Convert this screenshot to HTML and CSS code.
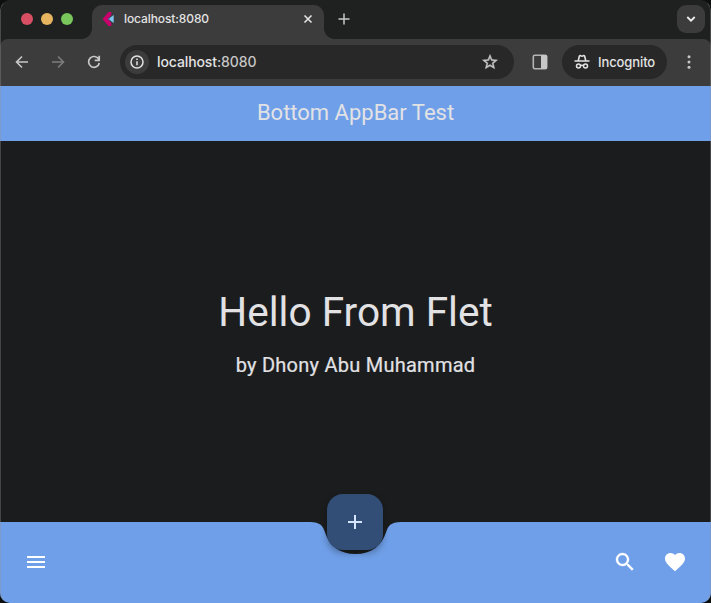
FILE: index.html
```html
<!DOCTYPE html>
<html lang="en">
<head>
<meta charset="utf-8">
<title>Bottom AppBar Test</title>
<link rel="stylesheet" href="styles.css">
</head>
<body>
<div class="window">
  <div class="tabstrip">
    <div class="lights"><i class="light red"></i><i class="light yellow"></i><i class="light green"></i></div>
    <div class="tab">
      <svg class="favicon" width="14" height="16" viewBox="0 0 14 16"><path d="M.5 8 6.500 1H9.300V4L6 8 9.300 12V15H6.500Z" fill="#c9006b"/><path d="M6.200 8 11.700 4V12Z" fill="#7bc4ee"/><path d="M6 8 7.600 6.800V9.200Z" fill="#4a6fb4"/></svg>
      <span class="tab-title">localhost:8080</span>
      <svg class="close" width="10" height="10" viewBox="0 0 10 10"><path d="M1.500 1.500 8.500 8.500M8.500 1.500 1.500 8.500" stroke="#e3e3e3" stroke-width="1.600"/></svg>
    </div>
    <svg class="new-tab" width="12" height="12" viewBox="0 0 12 12"><path d="M6 .5V11.500M.5 6H11.500" stroke="#c7c7c7" stroke-width="1.500"/></svg>
    <div class="tab-search"><svg width="10" height="8" viewBox="0 0 10 8"><path d="M1.300 2 5 5.700 8.700 2" fill="none" stroke="#eee" stroke-width="1.800"/></svg></div>
  </div>
  <div class="toolbar">
    <svg class="nav back" width="14" height="14" viewBox="0 0 14 14"><path d="M13 7H1.800M7 1.500 1.500 7 7 12.500" fill="none" stroke="#c7c7c7" stroke-width="1.600"/></svg>
    <svg class="nav forward" width="14" height="14" viewBox="0 0 14 14"><path d="M1 7H12.200M7 1.500 12.500 7 7 12.500" fill="none" stroke="#7c7c7c" stroke-width="1.600"/></svg>
    <svg class="nav reload" width="16" height="16" viewBox="0 0 16 16"><path d="M12.700 5.200A5.400 5.400 0 1 0 13.300 9M13.200 1.800V6.300H8.700" fill="none" stroke="#c7c7c7" stroke-width="1.700"/></svg>
    <div class="omnibox">
      <span class="site-info"><svg width="14" height="14" viewBox="0 0 14 14"><circle cx="7" cy="7" r="6" fill="none" stroke="#e3e3e3" stroke-width="1.500"/><path d="M7 6.200V10.300M7 3.500V5" stroke="#e3e3e3" stroke-width="1.500"/></svg></span>
      <span class="url">localhost<span class="port">:8080</span></span>
      <svg class="star" width="18" height="18" viewBox="0 0 24 24"><path d="M22 9.240l-7.190-.62L12 2 9.190 8.630 2 9.240l5.460 4.730L5.820 21 12 17.270 18.180 21l-1.630-7.030L22 9.240zM12 15.400l-3.760 2.270 1-4.280-3.320-2.880 4.380-.38L12 6.100l1.710 4.040 4.380.38-3.320 2.880 1 4.280L12 15.400z" fill="#c7c7c7" stroke="#c7c7c7" stroke-width=".6"/></svg>
    </div>
    <svg class="panel" width="16" height="16" viewBox="0 0 16 16"><rect x="1.300" y="1.300" width="13.400" height="13.400" rx="1.500" fill="none" stroke="#b4b4b4" stroke-width="1.600"/><path d="M9 1H13.500Q15 1 15 2.500V13.500Q15 15 13.500 15H9Z" fill="#c7c7c7"/></svg>
    <div class="incognito">
      <svg width="16" height="16" viewBox="0 0 16 16"><path d="M4.300 6.500 5.200 2.700Q5.600 1.300 6.800 1.800L8 2.200 9.200 1.800Q10.400 1.300 10.800 2.700L11.700 6.500M.5 7H15.500M6 11.800Q8 10.600 10 11.800" fill="none" stroke="#e3e3e3" stroke-width="1.600"/><circle cx="4.500" cy="12" r="2" fill="none" stroke="#e3e3e3" stroke-width="1.500"/><circle cx="11.500" cy="12" r="2" fill="none" stroke="#e3e3e3" stroke-width="1.500"/></svg>
      <span>Incognito</span>
    </div>
    <svg class="more" width="4" height="16" viewBox="0 0 4 16"><g fill="#c7c7c7"><circle cx="2" cy="2.700" r="1.500"/><circle cx="2" cy="8" r="1.500"/><circle cx="2" cy="13.300" r="1.500"/></g></svg>
  </div>
  <header class="appbar"><span>Bottom AppBar Test</span></header>
  <main class="content">
    <h1>Hello From Flet</h1>
    <p>by Dhony Abu Muhammad</p>
  </main>
  <footer class="bottombar">
    <svg class="bar-shape" width="711" height="81" viewBox="0 0 711 81"><path d="M0 0H306C318 0 322 1.500 324.500 9C329 24 340 32 355.500 32C371 32 382 24 386.500 9C389 1.500 393 0 405 0H711V81H0Z" fill="#6f9fe8"/></svg>
    <button class="fab" aria-label="Add"><svg width="24" height="24" viewBox="0 0 24 24"><path d="M19 13h-6v6h-2v-6H5v-2h6V5h2v6h6v2z" fill="#d6e5ff"/></svg></button>
    <svg class="action menu" width="24" height="24" viewBox="0 0 24 24"><path d="M3 18h18v-2H3v2zm0-5h18v-2H3v2zm0-7v2h18V6H3z"/></svg>
    <svg class="action search" width="24" height="24" viewBox="0 0 24 24"><path stroke="#fff" stroke-width=".3" d="M15.500 14h-.79l-.28-.27C15.410 12.590 16 11.110 16 9.500 16 5.910 13.090 3 9.500 3S3 5.910 3 9.500 5.910 16 9.500 16c1.610 0 3.090-.59 4.230-1.570l.27.28v.79l5 4.990L20.490 19l-4.990-5zm-6 0C7.010 14 5 11.990 5 9.500S7.010 5 9.500 5 14 7.010 14 9.500 11.990 14 9.500 14z"/></svg>
    <svg class="action" width="24" height="24" viewBox="0 0 24 24"><path d="M12 21.350l-1.450-1.320C5.400 15.360 2 12.280 2 8.500 2 5.420 4.420 3 7.500 3c1.740 0 3.410.81 4.500 2.090C13.090 3.810 14.760 3 16.500 3 19.580 3 22 5.420 22 8.500c0 3.780-3.400 6.860-8.550 11.540L12 21.350z"/></svg>
  </footer>
</div>
</body>
</html>
```
FILE: styles.css
```css
* { box-sizing: border-box; }
body { margin: 0; background: #0c0f0e; }
svg { display: block; flex: none; }
.window {
  position: relative;
  width: 711px;
  height: 603px;
  display: flex;
  flex-direction: column;
  overflow: hidden;
  border-radius: 10px;
  background: #1f2120;
  font-family: Roboto, sans-serif;
}
.window::after {
  content: "";
  position: absolute;
  inset: 0;
  border: 1px solid rgba(150, 150, 150, .35);
  border-top-color: transparent;
  border-bottom-color: transparent;
  border-radius: 10px;
  pointer-events: none;
}
.tabstrip { height: 39px; display: flex; align-items: flex-start; }
.lights { display: flex; gap: 8px; margin: 13px 0 0 21px; width: 71px; flex: none; }
.light { width: 12px; height: 12px; border-radius: 50%; }
.red { background: #d84f63; }
.yellow { background: #e7b45f; }
.green { background: #78c65c; }
.tab {
  position: relative;
  width: 232px;
  height: 34px;
  margin-top: 5px;
  padding: 0 11px 6px 10px;
  display: flex;
  align-items: center;
  border-radius: 10px 10px 0 0;
  background: #3c3c3c;
}
.tab::before, .tab::after {
  content: "";
  position: absolute;
  bottom: 0;
  width: 10px;
  height: 10px;
}
.tab::before { left: -10px; background: radial-gradient(circle at 0 0, transparent 9.5px, #3c3c3c 10px); }
.tab::after { right: -10px; background: radial-gradient(circle at 100% 0, transparent 9.5px, #3c3c3c 10px); }
.tab-title {
  margin-left: 8px;
  font: 500 12px/16px Inter, sans-serif;
  letter-spacing: -.1px;
  color: #e3e3e3;
}
.close { margin-left: auto; }
.new-tab { margin: 13px 0 0 14px; }
.tab-search {
  display: grid;
  place-items: center;
  width: 28px;
  height: 28px;
  margin: 5px 6px 0 auto;
  border-radius: 9px;
  background: #3c3c3c;
}
.toolbar {
  height: 47px;
  padding: 0 20px 1px 15px;
  display: flex;
  align-items: center;
  border-radius: 8px 8px 0 0;
  background: #3c3c3c;
}
.forward { margin-left: 22px; }
.reload { margin-left: 21px; }
.omnibox {
  width: 394px;
  height: 34px;
  margin-left: 18px;
  padding: 0 15px 0 5px;
  display: flex;
  align-items: center;
  border-radius: 17px;
  background: #282828;
}
.site-info {
  display: grid;
  place-items: center;
  width: 24px;
  height: 24px;
  border-radius: 50%;
  background: #3c3c3c;
}
.url { margin-left: 8px; font: 500 14px/20px Inter, sans-serif; letter-spacing: -.1px; color: #e3e3e3; }
.port { color: #c7c7c7; }
.star { margin-left: auto; }
.panel { margin-left: 18px; }
.incognito {
  width: 105px;
  height: 34px;
  margin-left: 14px;
  padding-left: 12px;
  display: flex;
  align-items: center;
  gap: 8px;
  border-radius: 17px;
  background: #282828;
  color: #e3e3e3;
  font: 500 13px/18px Inter, sans-serif;
  letter-spacing: -.1px;
}
.more { margin-left: auto; }
.appbar {
  height: 55px;
  padding-bottom: 2px;
  display: grid;
  place-items: center;
  background: #6f9fe8;
  color: #e2e2e5;
  font-size: 22px;
  line-height: 28px;
}
.content {
  height: 381px;
  padding-top: 145px;
  display: flex;
  flex-direction: column;
  align-items: center;
  background: #1b1c1e;
  color: #e2e2e5;
}
h1 { margin: 0; font-size: 40.6px; font-weight: 400; line-height: 52px; }
p { margin: 14px 0 0; font-size: 20px; line-height: 26px; letter-spacing: .25px; -webkit-text-stroke: .2px; }
.bottombar {
  position: relative;
  height: 81px;
  padding: 0 24px 1px;
  display: flex;
  align-items: center;
  background: #1b1c1e;
}
.bar-shape { position: absolute; inset: 0; }
.fab {
  position: absolute;
  left: 327.4px;
  top: -28px;
  width: 56px;
  height: 56px;
  padding: 0;
  display: grid;
  place-items: center;
  border: 0;
  border-radius: 16px;
  background: #324e76;
  box-shadow: 0 3px 6px rgba(0, 0, 0, .3);
}
.action { position: relative; fill: #fff; }
.search { margin: 0 26px 0 auto; }
```
